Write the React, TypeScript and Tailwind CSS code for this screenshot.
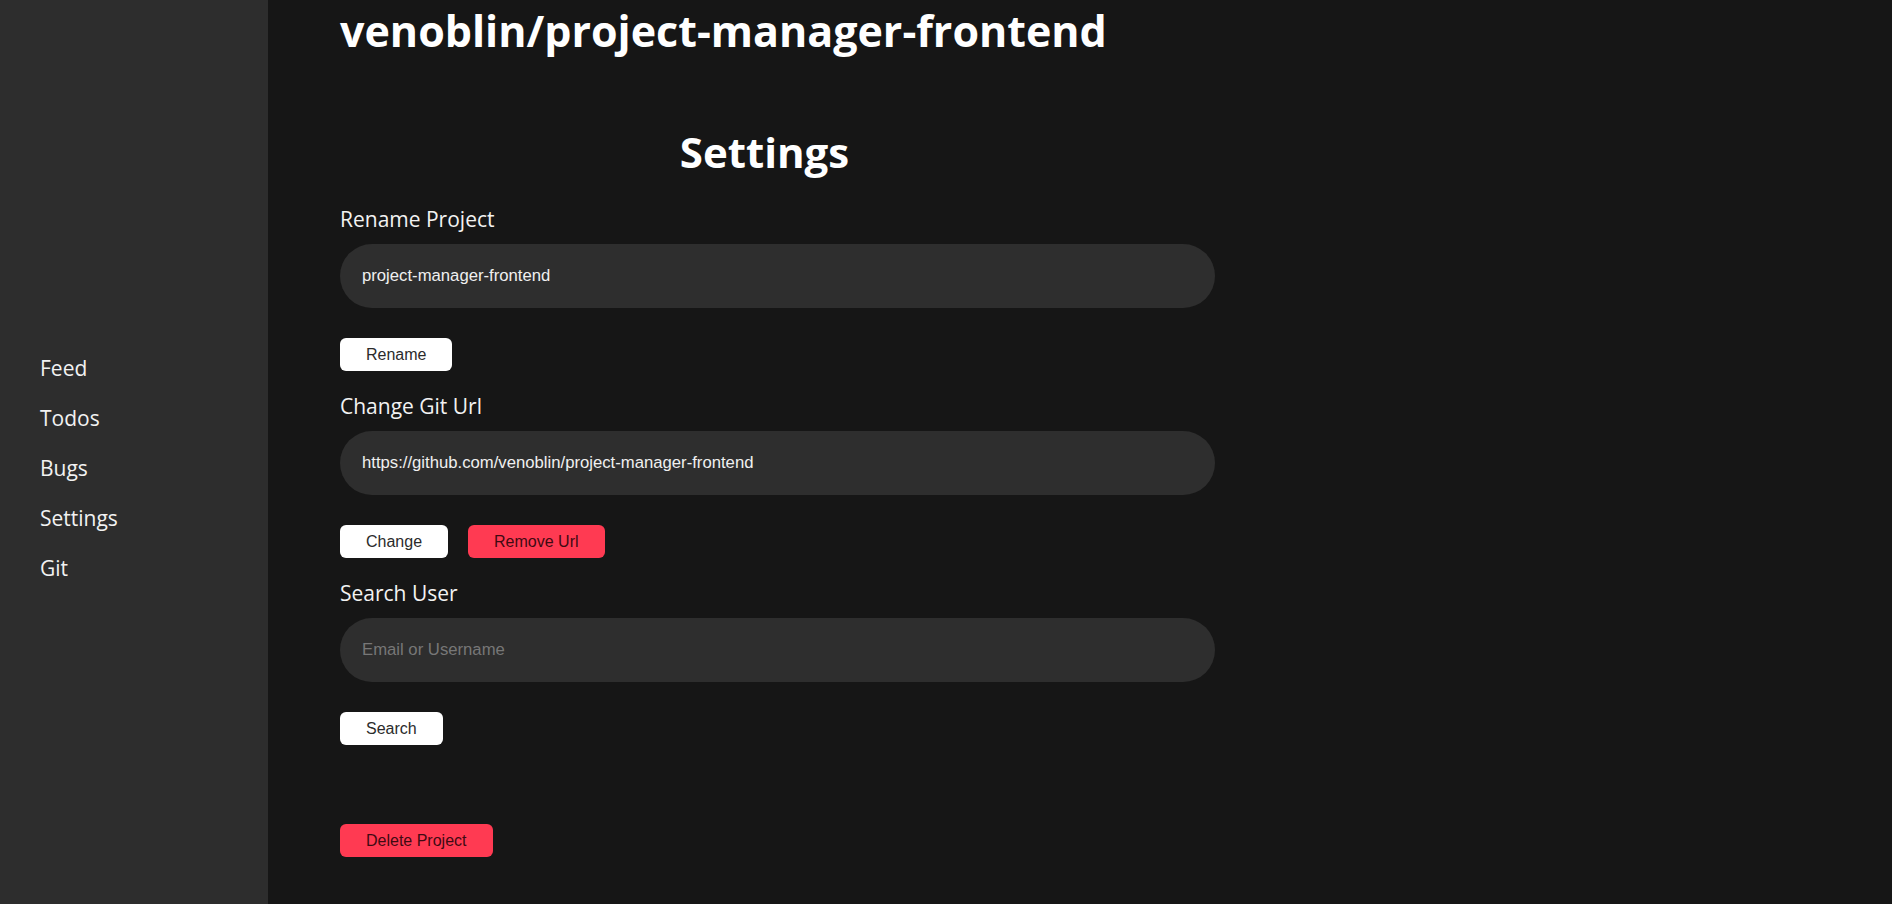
import { useState } from 'react';

const navItems = ['Feed', 'Todos', 'Bugs', 'Settings', 'Git'];

const heading = { fontFamily: '"Open Sans", "DejaVu Sans", sans-serif' };
const body = { fontFamily: '"Liberation Sans", Arial, sans-serif' };

function Sidebar() {
  return (
    <aside className="w-[268px] shrink-0 bg-[#2d2d2d] h-full">
      <nav className="flex flex-col gap-[20px] pt-[353px] pl-[40px]" style={heading}>
        {navItems.map((item) => (
          <a key={item} href="#" className="text-[21px] leading-[30px] text-[#f2f2f2]">
            {item}
          </a>
        ))}
      </nav>
    </aside>
  );
}

function Field({
  label,
  value,
  placeholder,
  onChange,
  children,
}: {
  label: string;
  value: string;
  placeholder?: string;
  onChange: (v: string) => void;
  children: React.ReactNode;
}) {
  return (
    <div className="flex flex-col">
      <label className="text-[21px] leading-[30px] text-[#f2f2f2]" style={heading}>
        {label}
      </label>
      <input
        className="mt-[10px] h-[64px] w-full rounded-full bg-[#2e2e2e] px-[22px] text-[16.7px] text-[#f0f0f0] outline-none placeholder:text-[#777]"
        style={body}
        value={value}
        placeholder={placeholder}
        onChange={(e) => onChange(e.target.value)}
      />
      <div className="mt-[30px] flex gap-[20px]">{children}</div>
    </div>
  );
}

function Btn({ children, danger }: { children: React.ReactNode; danger?: boolean }) {
  return (
    <button
      className={
        danger
          ? 'h-[33px] rounded-[6px] bg-[#ff3a52] px-[26px] text-[16px] text-[#3f0a12]'
          : 'h-[33px] rounded-[6px] bg-white px-[26px] text-[16px] text-[#2b2b2b]'
      }
      style={body}
    >
      {children}
    </button>
  );
}

export default function App() {
  const [name, setName] = useState('project-manager-frontend');
  const [url, setUrl] = useState('https://github.com/venoblin/project-manager-frontend');
  const [search, setSearch] = useState('');

  return (
    <div className="flex h-screen w-full overflow-hidden bg-[#161616]">
      <Sidebar />
      <main className="flex-1 pl-[72px]">
        <h1 className="mt-[6px] text-[43px] font-bold leading-[50px] text-white" style={heading}>
          venoblin/project-manager-frontend
        </h1>
        <div className="w-[875px]">
          <h2
            className="mt-[71px] pr-[26px] text-center text-[42px] font-bold leading-[50px] text-white"
            style={heading}
          >
            Settings
          </h2>
          <div className="mt-[27px] flex flex-col gap-[20px]">
            <Field label="Rename Project" value={name} onChange={setName}>
              <Btn>Rename</Btn>
            </Field>
            <Field label="Change Git Url" value={url} onChange={setUrl}>
              <Btn>Change</Btn>
              <Btn danger>Remove Url</Btn>
            </Field>
            <Field label="Search User" value={search} placeholder="Email or Username" onChange={setSearch}>
              <Btn>Search</Btn>
            </Field>
          </div>
          <div className="mt-[79px]">
            <Btn danger>Delete Project</Btn>
          </div>
        </div>
      </main>
    </div>
  );
}
